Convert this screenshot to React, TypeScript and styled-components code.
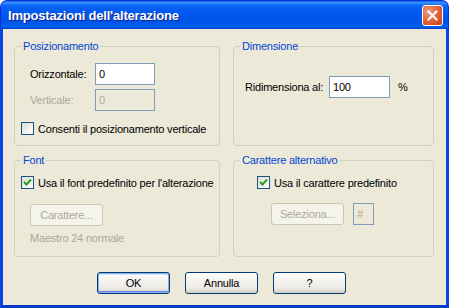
import React from 'react';
import styled, { createGlobalStyle } from 'styled-components';

const GlobalStyle = createGlobalStyle`
  html, body {
    margin: 0;
    padding: 0;
    background: #ffffff;
  }
  * {
    box-sizing: border-box;
  }
`;

const Window = styled.div`
  width: 449px;
  height: 308px;
  display: flex;
  flex-direction: column;
  font-family: "Liberation Sans", Arial, sans-serif;
  font-size: 11px;
  letter-spacing: -0.2px;
  color: #000;
`;

const TitleBar = styled.div`
  height: 29px;
  display: flex;
  align-items: center;
  justify-content: space-between;
  padding: 0 5px 0 7px;
  border-radius: 7px 7px 0 0;
  background: linear-gradient(
    to bottom,
    #0a5fe8 0%,
    #3d95ff 6%,
    #0a64f4 16%,
    #0058ee 45%,
    #0054e6 75%,
    #0062f7 90%,
    #0043cf 100%
  );
  border: 1px solid #0831d9;
  border-bottom: none;
`;

const Title = styled.span`
  color: #fff;
  font-family: "Liberation Sans", Arial, sans-serif;
  font-weight: bold;
  font-size: 13px;
  letter-spacing: -0.2px;
  text-shadow: 1px 1px 0 #0f1e89;
`;

const CloseButton = styled.div`
  width: 21px;
  height: 21px;
  border: 1px solid #fff;
  border-radius: 3px;
  background: radial-gradient(circle at 30% 30%, #f0a084 0%, #e2673f 45%, #c63d11 100%);
  display: flex;
  align-items: center;
  justify-content: center;
`;

const Body = styled.div`
  flex: 1;
  background: #ece9d8;
  border-left: 3px solid #0845e6;
  border-right: 3px solid #0845e6;
  border-bottom: 3px solid #0838c8;
  box-shadow: -1px 0 0 #0019b0, 1px 0 0 #0019b0, 0 1px 0 #0019b0;
  padding: 17px 10px 0 11px;
  display: flex;
  flex-direction: column;
`;

const Groups = styled.div`
  display: grid;
  grid-template-columns: 206px 201px;
  grid-template-rows: 100px 97px;
  column-gap: 13px;
  row-gap: 14px;
`;

const GroupBox = styled.div`
  position: relative;
  border: 1px solid #d0d0bf;
  border-radius: 4px;
`;

const Legend = styled.span`
  position: absolute;
  top: -7px;
  left: 6px;
  padding: 0 2px;
  background: #ece9d8;
  color: #0046d5;
  line-height: 13px;
`;

const GroupContent = styled.div<{ $pt: number; $pl: number }>`
  padding: ${p => p.$pt}px 0 0 ${p => p.$pl}px;
  display: flex;
  flex-direction: column;
`;

const FieldRow = styled.div<{ $gap?: number }>`
  display: flex;
  align-items: center;
  height: 22px;
  margin-bottom: ${p => p.$gap ?? 0}px;
`;

const Label = styled.span<{ $w?: number; $disabled?: boolean }>`
  width: ${p => (p.$w ? `${p.$w}px` : 'auto')};
  color: ${p => (p.$disabled ? '#aca899' : '#000')};
  white-space: nowrap;
`;

const TextBox = styled.div<{ $w: number; $disabled?: boolean }>`
  width: ${p => p.$w}px;
  height: 22px;
  border: 1px solid #7f9db9;
  background: ${p => (p.$disabled ? '#ece9d8' : '#fff')};
  color: ${p => (p.$disabled ? '#aca899' : '#000')};
  padding: 0 3px;
  display: flex;
  align-items: center;
`;

const CheckRow = styled.label<{ $ml?: number }>`
  display: flex;
  align-items: center;
  gap: 4px;
  margin-left: ${p => p.$ml ?? 0}px;
  white-space: nowrap;
`;

const Box = styled.span`
  width: 13px;
  height: 13px;
  border: 1px solid #1c5180;
  background: linear-gradient(135deg, #dcdcd7 0%, #f2f2ee 60%, #ffffff 100%);
  display: flex;
  align-items: center;
  justify-content: center;
`;

const PushButton = styled.div<{ $w: number; $disabled?: boolean; $default?: boolean }>`
  width: ${p => p.$w}px;
  height: 22px;
  border: 1px solid ${p => (p.$disabled ? '#c9c7ba' : '#003c74')};
  border-radius: 3px;
  background: ${p =>
    p.$disabled
      ? '#f5f4ea'
      : 'linear-gradient(to bottom, #ffffff 0%, #f4f3ee 40%, #ecebe6 75%, #d6d0c5 100%)'};
  color: ${p => (p.$disabled ? '#aca899' : '#000')};
  box-shadow: ${p =>
    p.$default ? 'inset 0 0 0 1px #8caee8, inset 0 1px 0 1px #cee7ff, inset 0 -1px 0 1px #6982ee' : 'none'};
  display: flex;
  align-items: center;
  justify-content: center;
`;

const Note = styled.span`
  color: #aca899;
  margin-top: 6px;
  margin-left: 9px;
`;

const ButtonBar = styled.div`
  margin-top: 15px;
  display: flex;
  gap: 15px;
  padding-left: 83px;
`;

const Check = () => (
  <svg width="9" height="9" viewBox="0 0 9 9">
    <path d="M1 4 L3.5 6.5 L8 1.5" fill="none" stroke="#21a121" strokeWidth="2" />
  </svg>
);

const Checkbox = ({ checked, label, ml }: { checked: boolean; label: string; ml?: number }) => (
  <CheckRow $ml={ml}>
    <Box>{checked && <Check />}</Box>
    <span>{label}</span>
  </CheckRow>
);

const App = () => {
  return (
    <Window>
      <GlobalStyle />
      <TitleBar>
        <Title>Impostazioni dell'alterazione</Title>
        <CloseButton>
          <svg width="11" height="11" viewBox="0 0 11 11">
            <path d="M1.5 1.5 L9.5 9.5 M9.5 1.5 L1.5 9.5" stroke="#fff" strokeWidth="2" strokeLinecap="square" />
          </svg>
        </CloseButton>
      </TitleBar>
      <Body>
        <Groups>
          <GroupBox>
            <Legend>Posizionamento</Legend>
            <GroupContent $pt={16} $pl={15}>
              <FieldRow $gap={4}>
                <Label $w={65}>Orizzontale:</Label>
                <TextBox $w={60}>0</TextBox>
              </FieldRow>
              <FieldRow $gap={11}>
                <Label $w={65} $disabled>Verticale:</Label>
                <TextBox $w={60} $disabled>0</TextBox>
              </FieldRow>
              <Checkbox checked={false} label="Consenti il posizionamento verticale" ml={-9} />
            </GroupContent>
          </GroupBox>
          <GroupBox>
            <Legend>Dimensione</Legend>
            <GroupContent $pt={29} $pl={11}>
              <FieldRow>
                <Label $w={84}>Ridimensiona al:</Label>
                <TextBox $w={61}>100</TextBox>
                <Label style={{ marginLeft: 8 }}>%</Label>
              </FieldRow>
            </GroupContent>
          </GroupBox>
          <GroupBox>
            <Legend>Font</Legend>
            <GroupContent $pt={15} $pl={6}>
              <Checkbox checked label="Usa il font predefinito per l'alterazione" />
              <PushButton $w={73} $disabled style={{ marginTop: 15, marginLeft: 9 }}>
                Carattere...
              </PushButton>
              <Note>Maestro 24 normale</Note>
            </GroupContent>
          </GroupBox>
          <GroupBox>
            <Legend>Carattere alternativo</Legend>
            <GroupContent $pt={15} $pl={23}>
              <Checkbox checked label="Usa il carattere predefinito" />
              <FieldRow style={{ marginTop: 14, gap: 9, marginLeft: 14 }}>
                <PushButton $w={73} $disabled>Seleziona...</PushButton>
                <TextBox $w={21} $disabled>#</TextBox>
              </FieldRow>
            </GroupContent>
          </GroupBox>
        </Groups>
        <ButtonBar>
          <PushButton $w={73} $default>OK</PushButton>
          <PushButton $w={73}>Annulla</PushButton>
          <PushButton $w={73}>?</PushButton>
        </ButtonBar>
      </Body>
    </Window>
  );
};

export default App;
